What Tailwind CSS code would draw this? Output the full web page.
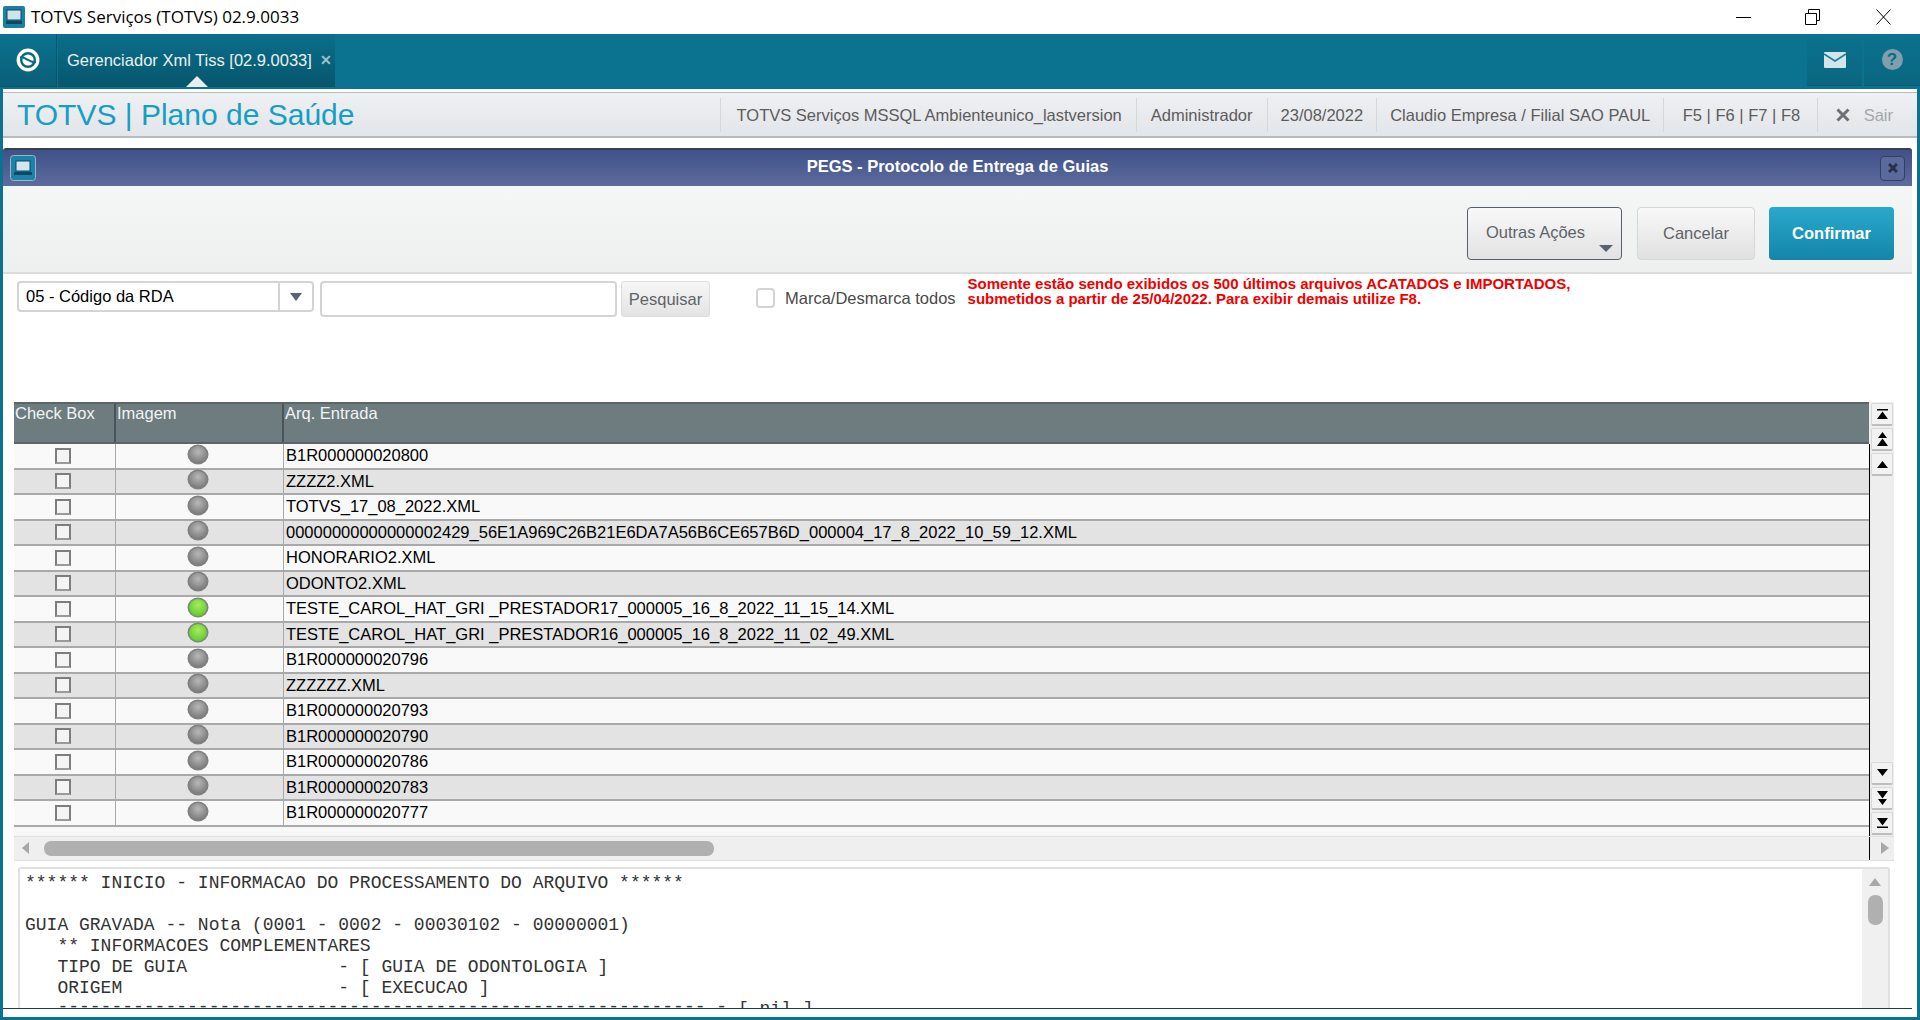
<!DOCTYPE html>
<html lang="pt-BR">
<head>
    <meta charset="UTF-8">
    <title>TOTVS Serviços (TOTVS) 02.9.0033</title>
    <script src="https://cdn.jsdelivr.net/npm/@tailwindcss/browser@4"></script>
</head>
<body class="bg-[#0b7290] h-screen w-screen overflow-hidden font-['Liberation_Sans',Arial,sans-serif] flex flex-col">
    <!-- Barra da janela -->
    <div class="h-[34px] bg-white flex items-center shrink-0">
        <svg class="ml-[3px] w-[22px] h-[22px]" viewBox="0 0 22 22"><rect x="0" y="0" width="22" height="22" rx="2" fill="#1a7fa3"/><rect x="4" y="4" width="14" height="10" fill="#cfe3ea" stroke="#0b4a63"/><rect x="3" y="15" width="16" height="3" fill="#0b4a63"/></svg>
        <span class="ml-[6px] text-[17px] text-black font-['Open_Sans',sans-serif]">TOTVS Serviços (TOTVS) 02.9.0033</span>
        <div class="ml-auto flex items-center">
            <svg class="w-[15px] h-[16px] mr-[54px]" viewBox="0 0 15 16"><path d="M0 8.5H15" stroke="#000" stroke-width="1"/></svg>
            <svg class="w-[15px] h-[16px] mr-[56px]" viewBox="0 0 15 16"><path d="M0.5 4.5H11.5V15.5H0.5Z M3.5 4V0.5H14.5V11.5H12" fill="none" stroke="#000" stroke-width="1"/></svg>
            <svg class="w-[15px] h-[16px] mr-[29px]" viewBox="0 0 15 16"><path d="M0.5 0.5L14.5 15.5M14.5 0.5L0.5 15.5" stroke="#000" stroke-width="1"/></svg>
        </div>
    </div>

    <!-- Barra de abas -->
    <div class="h-[55px] shrink-0 flex items-start">
        <div class="w-[57px] h-[53px] bg-gradient-to-b from-[#0b7290] to-[#0a5f78] border-r border-b border-[#0a5468] flex items-center justify-center">
            <svg class="w-[24px] h-[24px]" viewBox="0 0 24 24"><circle cx="12" cy="12" r="9.7" fill="none" stroke="#fff" stroke-width="3.4"/><circle cx="12" cy="12" r="5.6" fill="#fff"/><path d="M4 9.5C9 8 14 15.5 20 14" fill="none" stroke="#0b6a86" stroke-width="2"/></svg>
        </div>
        <div class="relative ml-[1px] w-[277px] h-[53px] bg-gradient-to-b from-[#0b6f8b] to-[#07566d] flex items-center pl-[9px]">
            <span class="text-[16.5px] text-[#e8f1f4]">Gerenciador Xml Tiss [02.9.0033]</span>
            <span class="ml-[8px] text-[14px] font-bold text-[#9fc0cc]">✕</span>
            <div class="absolute left-[128px] bottom-0 w-0 h-0 border-x-[11px] border-x-transparent border-b-[11px] border-b-[#e8eef0]"></div>
        </div>
        <div class="ml-auto w-[55px] h-[52px] bg-gradient-to-b from-[#0b7290] to-[#0a6680] border-b border-[#0a5c74] flex items-center justify-center">
            <svg class="w-[22px] h-[16px]" viewBox="0 0 22 16"><rect width="22" height="16" rx="1" fill="#d3e4ea"/><path d="M0 2L11 9L22 2" fill="none" stroke="#1a7f9c" stroke-width="1.6"/></svg>
        </div>
        <div class="ml-[2px] w-[56px] h-[52px] bg-gradient-to-b from-[#0b7290] to-[#0a6680] border-b border-[#0a5c74] flex items-center justify-center">
            <span class="w-[21px] h-[21px] rounded-full bg-[#7f9fae] text-[#0b6a86] text-[17px] font-bold leading-[21px] text-center">?</span>
        </div>
    </div>

    <!-- Area branca -->
    <div class="flex-1 min-h-0 ml-[3px] mr-[3px] mb-[3px] bg-white flex flex-col">
        <div class="mt-[3px] h-[46px] shrink-0 bg-gradient-to-b from-[#eff0f4] to-[#e2e5e9] border-y border-[#b9bcbf] border-b-2 flex items-center">
            <span class="ml-[14px] text-[30px] text-[#149fc3]">TOTVS | Plano de Saúde</span>
            <div class="ml-auto flex items-center h-[34px] text-[16.5px] text-[#5c5c5c]">
                <span class="border-l border-[#d5d8db] h-full flex items-center pt-[1px] pl-[16px] pr-[14.5px]">TOTVS Serviços MSSQL Ambienteunico_lastversion</span>
                <span class="border-l border-[#d5d8db] h-full flex items-center pt-[1px] pl-[13.5px] pr-[14px]">Administrador</span>
                <span class="border-l border-[#d5d8db] h-full flex items-center pt-[1px] pl-[13px] pr-[13px]">23/08/2022</span>
                <span class="border-l border-[#d5d8db] h-full flex items-center pt-[1px] pl-[13px] pr-[13px]">Claudio Empresa / Filial SAO PAUL</span>
                <span class="border-l border-[#d5d8db] h-full flex items-center pt-[1px] pl-[18.5px] pr-[16.5px]">F5 | F6 | F7 | F8</span>
                <span class="border-l border-[#d5d8db] h-full flex items-center pt-[1px] pl-[18px] pr-[24px] text-[#a3a6a9]">
                    <svg class="w-[14px] h-[14px] mr-[14px]" viewBox="0 0 14 14"><path d="M1.5 1.5L12.5 12.5M12.5 1.5L1.5 12.5" stroke="#6b7077" stroke-width="3"/></svg>Sair
                </span>
            </div>
        </div>

        <!-- Janela PEGS -->
        <div class="mt-[10px] flex-1 min-h-0 flex flex-col border-b border-[#123d5c] mr-[5px] mb-[8px]">
            <div class="h-[38px] shrink-0 bg-gradient-to-b from-[#3f5189] to-[#5e6c9c] border-t-2 border-[#3a3f4c] rounded-t-[3px] flex items-center relative">
                <svg class="ml-[7px] w-[26px] h-[26px]" viewBox="0 0 26 26"><rect x="0.5" y="0.5" width="25" height="25" rx="3" fill="#1b83a8" stroke="#9fb4c6"/><rect x="6" y="6" width="14" height="10" fill="#d7e6ec" stroke="#0b4a63"/><rect x="4" y="17" width="18" height="3" fill="#0b4a63"/></svg>
                <span class="absolute left-0 right-0 -mt-[3px] text-center text-[16.5px] font-bold text-white pointer-events-none">PEGS - Protocolo de Entrega de Guias</span>
                <div class="ml-auto mr-[7px] w-[25px] h-[25px] rounded-[4px] border border-[#363e63] bg-[#5b6a9c] flex items-center justify-center">
                    <svg class="w-[10px] h-[10px]" viewBox="0 0 10 10"><path d="M1 1L9 9M9 1L1 9" stroke="#2b3148" stroke-width="3"/></svg>
                </div>
            </div>

            <div class="h-[88px] shrink-0 bg-gradient-to-b from-[#f5f6f6] to-[#eeefef] border-b-2 border-[#dcdcdc] flex items-start justify-end pt-[21px] pr-[18px]">
                <button class="relative w-[155px] h-[53px] rounded-[4px] border border-[#55606e] bg-gradient-to-b from-[#f9f9f9] to-[#e2e2e2] text-[16.5px] text-[#5f6368] text-left pl-[18px] pb-[2px]">Outras Ações
                    <span class="absolute right-[8px] bottom-[7px] w-0 h-0 border-x-[7px] border-x-transparent border-t-[7px] border-t-[#5a6270]"></span>
                </button>
                <button class="ml-[15px] w-[118px] h-[53px] rounded-[4px] border border-[#d6d6d6] bg-gradient-to-b from-[#f9f9f9] to-[#e0e0e0] text-[16.5px] text-[#5f6368]">Cancelar</button>
                <button class="ml-[14px] w-[125px] h-[53px] rounded-[4px] bg-gradient-to-b from-[#29a9cc] to-[#1385a9] text-[16.5px] font-bold text-white">Confirmar</button>
            </div>

            <!-- Filtros -->
            <div class="h-[128px] shrink-0 flex items-start pt-[7px] pl-[14px] bg-white">
                <div class="w-[297px] h-[31px] rounded-[4px] border-2 border-[#d4d4d4] flex items-center">
                    <span class="flex-1 pl-[7px] text-[16.5px] text-black">05 - Código da RDA</span>
                    <span class="w-[34px] h-full border-l-2 border-[#d4d4d4] flex items-center justify-center"><span class="w-0 h-0 border-x-[6px] border-x-transparent border-t-[8px] border-t-[#5a6270]"></span></span>
                </div>
                <div class="ml-[6px] w-[297px] h-[36px] rounded-[4px] border-2 border-[#d4d4d4] bg-white"></div>
                <button class="ml-[4px] w-[89px] h-[36px] rounded-[3px] border border-[#dcdcdc] bg-gradient-to-b from-[#f6f6f6] to-[#e4e4e4] text-[16.5px] text-[#5f6368] pt-[1px]">Pesquisar</button>
                <div class="ml-[46px] mt-[7px] w-[19px] h-[20px] rounded-[4px] border-2 border-[#d4d4d4]"></div>
                <span class="ml-[10px] mt-[7px] text-[16.5px] leading-[20px] text-[#4a4a4a]">Marca/Desmarca todos</span>
                <p class="ml-[12px] text-[15px] leading-[15px] font-bold text-[#f00000] whitespace-nowrap -mt-[5px]">Somente estão sendo exibidos os 500 últimos arquivos ACATADOS e IMPORTADOS,<br>submetidos a partir de 25/04/2022. Para exibir demais utilize F8.</p>
            </div>

            <!-- Grade -->
            <div class="flex shrink-0 pl-[11px]">
                <div class="w-[1855px]">
                    <div class="h-[42px] bg-[#6e7c80] border-y-2 border-[#5b666a] flex text-[16.5px] leading-[18px] text-[#f0f3f4]">
                        <div class="w-[102px] border-r-2 border-[#4a5458] pl-[1px]">Check Box</div>
                        <div class="w-[168px] border-r-2 border-[#4a5458] pl-[1px]">Imagem</div>
                        <div class="flex-1 pl-[1px]">Arq. Entrada</div>
                    </div>
                    <div id="linhas"></div>
                    <div class="h-[9px] bg-[#f7f7f7]"></div>
                </div>
                <div class="w-[25px] flex flex-col items-start bg-[#eeeeee] relative">
                    <div class="absolute left-0 top-[42px] bottom-0 w-[1px] bg-black"></div>
                    <div class="ml-[2px] mt-[1px] flex flex-col gap-[2px]">
                        <button class="w-[22px] h-[23px] rounded-[2px] border border-[#d8d8d8] border-b-2 border-b-[#bdbdbd] bg-[#f2f2f2] flex items-center justify-center"><svg class="w-[11px] h-[10px]" viewBox="0 0 11 10"><path d="M0 0H11V1.5H0ZM5.5 2.5L11 10H0Z"/></svg></button>
                        <button class="w-[22px] h-[23px] rounded-[2px] border border-[#d8d8d8] border-b-2 border-b-[#bdbdbd] bg-[#f2f2f2] flex items-center justify-center"><svg class="w-[11px] h-[14px]" viewBox="0 0 11 14"><path d="M5.5 0L10 6H1ZM5.5 6.5L11 14H0Z"/></svg></button>
                        <button class="w-[22px] h-[23px] rounded-[2px] border border-[#d8d8d8] border-b-2 border-b-[#bdbdbd] bg-[#f2f2f2] flex items-center justify-center"><svg class="w-[11px] h-[7px]" viewBox="0 0 11 7"><path d="M5.5 0L11 7H0Z"/></svg></button>
                    </div>
                    <div class="ml-[2px] mt-auto mb-[1px] flex flex-col gap-[2px]">
                        <button class="w-[22px] h-[23px] rounded-[2px] border border-[#d8d8d8] border-b-2 border-b-[#bdbdbd] bg-[#f2f2f2] flex items-center justify-center"><svg class="w-[11px] h-[7px]" viewBox="0 0 11 7"><path d="M0 0H11L5.5 7Z"/></svg></button>
                        <button class="w-[22px] h-[23px] rounded-[2px] border border-[#d8d8d8] border-b-2 border-b-[#bdbdbd] bg-[#f2f2f2] flex items-center justify-center"><svg class="w-[11px] h-[14px]" viewBox="0 0 11 14"><path d="M0 0H11L5.5 7.5ZM1 8H10L5.5 14Z"/></svg></button>
                        <button class="w-[22px] h-[23px] rounded-[2px] border border-[#d8d8d8] border-b-2 border-b-[#bdbdbd] bg-[#f2f2f2] flex items-center justify-center"><svg class="w-[11px] h-[10px]" viewBox="0 0 11 10"><path d="M0 0H11L5.5 7.5ZM0 8.5H11V10H0Z"/></svg></button>
                    </div>
                </div>
            </div>

            <!-- Barra de rolagem horizontal -->
            <div class="h-[25px] shrink-0 ml-[11px] w-[1880px] flex items-center bg-[#efefef] border-y border-[#e0e0e0] relative">
                <span class="ml-[8px] w-0 h-0 border-y-[6px] border-y-transparent border-r-[7px] border-r-[#a8a8a8]"></span>
                <span class="ml-[15px] w-[670px] h-[15px] rounded-[7px] bg-[#b0b0b0]"></span>
                <div class="absolute left-[1855px] top-0 bottom-0 w-[1px] bg-black"></div>
                <span class="ml-auto mr-[5px] w-0 h-0 border-y-[6px] border-y-transparent border-l-[8px] border-l-[#a8a8a8]"></span>
            </div>

            <!-- Memo -->
            <div class="mt-[6px] flex-1 min-h-0 ml-[15px] w-[1872px] border-2 border-[#e0e0e0] border-b-0 rounded-t-[3px] flex overflow-hidden">
                <pre class="flex-1 pl-[5px] pt-[4px] font-['Liberation_Mono','Courier_New',monospace] text-[18px] leading-[21px] text-[#333] overflow-hidden">****** INICIO - INFORMACAO DO PROCESSAMENTO DO ARQUIVO ******

GUIA GRAVADA -- Nota (0001 - 0002 - 00030102 - 00000001)
   ** INFORMACOES COMPLEMENTARES
   TIPO DE GUIA              - [ GUIA DE ODONTOLOGIA ]
   ORIGEM                    - [ EXECUCAO ]
   <span class="relative -top-[2px]">------------------------------------------------------------ -</span> [ nil ]</pre>
                <div class="w-[26px] bg-[#f0f0f0] flex flex-col items-center">
                    <span class="mt-[9px] w-0 h-0 border-x-[6px] border-x-transparent border-b-[8px] border-b-[#a8a8a8]"></span>
                    <span class="mt-[9px] w-[15px] h-[30px] rounded-[7px] bg-[#b0b0b0]"></span>
                </div>
            </div>
        </div>
    </div>

    <svg class="absolute w-0 h-0">
        <defs>
            <radialGradient id="ledCinza" cx="50%" cy="35%" r="65%"><stop offset="0%" stop-color="#b8b8b8"/><stop offset="100%" stop-color="#7a7a7a"/></radialGradient>
            <radialGradient id="ledVerde" cx="50%" cy="35%" r="65%"><stop offset="0%" stop-color="#a6ec5c"/><stop offset="100%" stop-color="#62c92e"/></radialGradient>
        </defs>
    </svg>

    <script>
        const arquivos = [
            ['B1R000000020800', 0],
            ['ZZZZ2.XML', 0],
            ['TOTVS_17_08_2022.XML', 0],
            ['00000000000000002429_56E1A969C26B21E6DA7A56B6CE657B6D_000004_17_8_2022_10_59_12.XML', 0],
            ['HONORARIO2.XML', 0],
            ['ODONTO2.XML', 0],
            ['TESTE_CAROL_HAT_GRI _PRESTADOR17_000005_16_8_2022_11_15_14.XML', 1],
            ['TESTE_CAROL_HAT_GRI _PRESTADOR16_000005_16_8_2022_11_02_49.XML', 1],
            ['B1R000000020796', 0],
            ['ZZZZZZ.XML', 0],
            ['B1R000000020793', 0],
            ['B1R000000020790', 0],
            ['B1R000000020786', 0],
            ['B1R000000020783', 0],
            ['B1R000000020777', 0]
        ];
        document.getElementById('linhas').innerHTML = arquivos.map((a, i) => `
            <div class="h-[25.5px] flex border-b-2 border-[#a9a9a9] text-[16.5px] text-black ${i % 2 ? 'bg-[#e3e3e3]' : 'bg-[#f9f9f9]'}">
                <div class="w-[102px] border-r border-[#a9a9a9] flex items-center justify-center pr-[3px]"><span class="w-[16px] h-[16px] border-2 border-[#7d7d7d] border-b-[#9a9a9a] bg-[#f4f4f4]"></span></div>
                <div class="w-[168px] border-r border-[#a9a9a9] flex items-center justify-center pr-[4px]"><svg class="w-[22px] h-[21px] -mt-[3px]" viewBox="0 0 22 21"><ellipse cx="11" cy="10.5" rx="10.5" ry="10" fill="${a[1] ? '#7c8a78' : '#808080'}"/><ellipse cx="11" cy="10.5" rx="8.8" ry="8.6" fill="${a[1] ? 'url(#ledVerde)' : 'url(#ledCinza)'}"/></svg></div>
                <div class="flex-1 pl-[2px] flex items-center whitespace-pre">${a[0]}</div>
            </div>
        `).join('');
    </script>
</body>
</html>
